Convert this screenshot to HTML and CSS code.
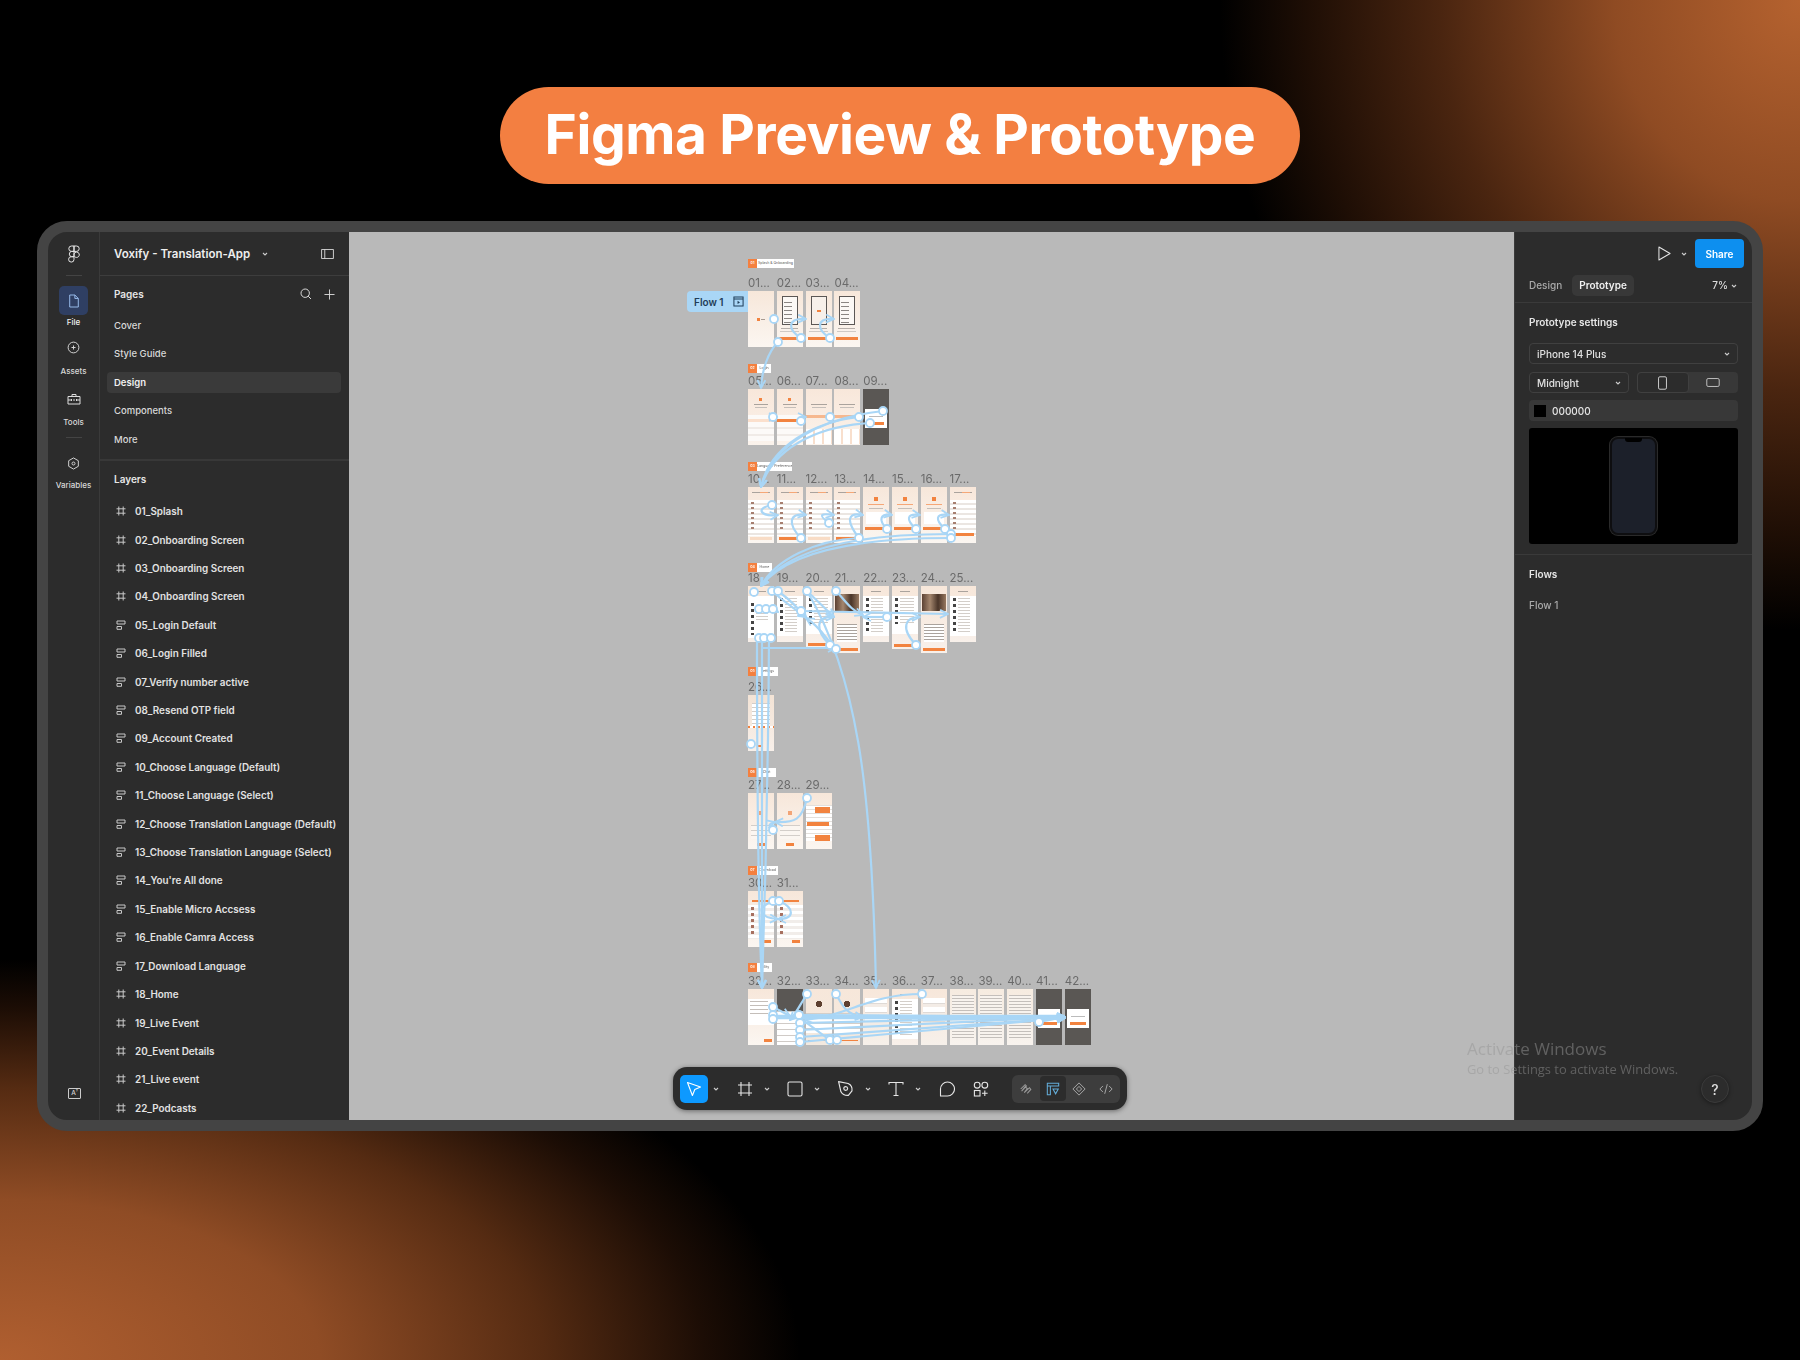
FILE: index.html
```html
<!DOCTYPE html>
<html lang="en">
<head>
    <meta charset="UTF-8">
    <title>Figma Preview &amp; Prototype</title>
    <link rel="stylesheet" href="styles.css">
</head>
<body>
    <svg class="sprites" width="0" height="0">
        <symbol id="i-frame" viewBox="0 0 10 10"><path d="M2.8.5v9M7.2.5v9M.5 2.8h9M.5 7.2h9" fill="none" stroke="currentColor" stroke-width="1"/></symbol>
        <symbol id="i-auto" viewBox="0 0 10 10"><path d="M1 1h8v3H1zM1 6.5h4.5v2.8H1z" fill="none" stroke="currentColor" stroke-width="1"/></symbol>
        <symbol id="i-chev" viewBox="0 0 8 8"><path d="M2 3l2 2 2-2" fill="none" stroke="currentColor" stroke-width="1.1"/></symbol>
    </svg>

    <h1 class="pill">Figma Preview &amp; Prototype</h1>

    <div class="frame">
        <nav class="rail">
            <svg class="rail-logo" viewBox="0 0 12 18" width="12" height="18"><path d="M6 1H3.5a2.7 2.7 0 0 0 0 5.4H6zM6 1h2.5a2.7 2.7 0 0 1 0 5.4H6zM6 6.4H3.5a2.7 2.7 0 0 0 0 5.3H6zM11.200 9a2.7 2.7 0 1 1-5.200 0 2.7 2.7 0 0 1 5.200 0zM6 11.700H3.500A2.700 2.700 0 1 0 6 14.400z" fill="none" stroke="#e6e6e6" stroke-width="1"/></svg>
            <div class="rail-rule first"></div>
            <div class="rail-item active">
                <span class="rail-btn"><svg viewBox="0 0 14 16" width="12" height="14"><path d="M2 1h6l4 4v10H2zM8 1v4h4" fill="none" stroke="#9cc0f0" stroke-width="1.1"/></svg></span>
                <span>File</span>
            </div>
            <div class="rail-item assets">
                <svg viewBox="0 0 14 14" width="13" height="13"><circle cx="7" cy="7" r="5.8" fill="none" stroke="#ddd" stroke-width="1"/><path d="M7 4.8v4.4M4.8 7h4.4" stroke="#ddd"/></svg>
                <span>Assets</span>
            </div>
            <div class="rail-item tools">
                <svg viewBox="0 0 14 14" width="14" height="14"><path d="M1 4.5h12V12H1zM5 4.5V2.5h4v2M1 8h3M6 8h2M10 8h3M4.5 7v2M9.5 7v2" fill="none" stroke="#ddd" stroke-width="1"/></svg>
                <span>Tools</span>
            </div>
            <div class="rail-rule"></div>
            <div class="rail-item vars">
                <svg viewBox="0 0 14 14" width="13" height="13"><path d="M7 1l5.2 3v6L7 13l-5.2-3V4z" fill="none" stroke="#ddd" stroke-width="1"/><circle cx="7" cy="7" r="1.6" fill="none" stroke="#ddd"/></svg>
                <span>Variables</span>
            </div>
            <div class="rail-bottom">A<sup>?</sup></div>
        </nav>

        <aside class="sidebar">
            <header class="side-head">
                <span class="file-name">Voxify - Translation-App</span>
                <svg class="chev" width="8" height="8"><use href="#i-chev"/></svg>
                <svg class="panel-toggle" viewBox="0 0 14 11" width="13" height="10"><path d="M.5.5h13v10H.5zM4 .5v10" fill="none" stroke="#ddd"/></svg>
            </header>
            <div class="pages">
                <div class="sec-title">
                    <span>Pages</span>
                    <svg viewBox="0 0 12 12" width="12" height="12"><circle cx="5.2" cy="5.2" r="4.2" fill="none" stroke="#ddd"/><path d="M8.2 8.2L11 11" stroke="#ddd"/></svg>
                    <svg viewBox="0 0 12 12" width="11" height="11"><path d="M6 .5v11M.5 6h11" stroke="#ddd"/></svg>
                </div>
                <ul class="page-list">
                    <li>Cover</li>
                    <li>Style Guide</li>
                    <li class="current">Design</li>
                    <li>Components</li>
                    <li>More</li>
                </ul>
            </div>
            <div class="layers">
                <div class="sec-title"><span>Layers</span></div>
                <ul class="layer-list">
                    <li><svg><use href="#i-frame"/></svg>01_Splash</li>
                    <li><svg><use href="#i-frame"/></svg>02_Onboarding Screen</li>
                    <li><svg><use href="#i-frame"/></svg>03_Onboarding Screen</li>
                    <li><svg><use href="#i-frame"/></svg>04_Onboarding Screen</li>
                    <li><svg><use href="#i-auto"/></svg>05_Login Default</li>
                    <li><svg><use href="#i-auto"/></svg>06_Login Filled</li>
                    <li><svg><use href="#i-auto"/></svg>07_Verify number active</li>
                    <li><svg><use href="#i-auto"/></svg>08_Resend OTP field</li>
                    <li><svg><use href="#i-auto"/></svg>09_Account Created</li>
                    <li><svg><use href="#i-auto"/></svg>10_Choose Language (Default)</li>
                    <li><svg><use href="#i-auto"/></svg>11_Choose Language (Select)</li>
                    <li><svg><use href="#i-auto"/></svg>12_Choose Translation Language (Default)</li>
                    <li><svg><use href="#i-auto"/></svg>13_Choose Translation Language (Select)</li>
                    <li><svg><use href="#i-auto"/></svg>14_You're All done</li>
                    <li><svg><use href="#i-auto"/></svg>15_Enable Micro Accsess</li>
                    <li><svg><use href="#i-auto"/></svg>16_Enable Camra Access</li>
                    <li><svg><use href="#i-auto"/></svg>17_Download Language</li>
                    <li><svg><use href="#i-frame"/></svg>18_Home</li>
                    <li><svg><use href="#i-frame"/></svg>19_Live Event</li>
                    <li><svg><use href="#i-frame"/></svg>20_Event Details</li>
                    <li><svg><use href="#i-frame"/></svg>21_Live event</li>
                    <li><svg><use href="#i-frame"/></svg>22_Podcasts</li>
                </ul>
            </div>
        </aside>

        <main class="canvas">
            <div class="board">
                <section class="group g1">
                    <div class="group-label"><b>01</b><span class="w46">Splash &amp; Onboarding</span></div>
                    <div class="row">
                        <div class="cell"><i>01...</i><div class="thumb splash"></div></div>
                        <div class="cell"><i>02...</i><div class="thumb onb"></div></div>
                        <div class="cell"><i>03...</i><div class="thumb onb plain"></div></div>
                        <div class="cell"><i>04...</i><div class="thumb onb"></div></div>
                    </div>
                </section>
                <section class="group g2">
                    <div class="group-label"><b>02</b><span class="w23">Login</span></div>
                    <div class="row">
                        <div class="cell"><i>05...</i><div class="thumb login"></div></div>
                        <div class="cell"><i>06...</i><div class="thumb login filled"></div></div>
                        <div class="cell"><i>07...</i><div class="thumb otp"></div></div>
                        <div class="cell"><i>08...</i><div class="thumb otp"></div></div>
                        <div class="cell"><i>09...</i><div class="thumb dark modal"></div></div>
                    </div>
                </section>
                <section class="group g3">
                    <div class="group-label"><b>03</b><span class="w35">Language Preference</span></div>
                    <div class="row">
                        <div class="cell"><i>10...</i><div class="thumb lang"></div></div>
                        <div class="cell"><i>11...</i><div class="thumb lang cta"></div></div>
                        <div class="cell"><i>12...</i><div class="thumb lang"></div></div>
                        <div class="cell"><i>13...</i><div class="thumb lang cta"></div></div>
                        <div class="cell"><i>14...</i><div class="thumb done"></div></div>
                        <div class="cell"><i>15...</i><div class="thumb done"></div></div>
                        <div class="cell"><i>16...</i><div class="thumb done"></div></div>
                        <div class="cell"><i>17...</i><div class="thumb lang cta dl"></div></div>
                    </div>
                </section>
                <section class="group g4">
                    <div class="group-label"><b>04</b><span class="w15">Home</span></div>
                    <div class="row">
                        <div class="cell"><i>18...</i><div class="thumb home"></div></div>
                        <div class="cell"><i>19...</i><div class="thumb list"></div></div>
                        <div class="cell"><i>20...</i><div class="thumb list cta h62"></div></div>
                        <div class="cell"><i>21...</i><div class="thumb photo h67"></div></div>
                        <div class="cell"><i>22...</i><div class="thumb list"></div></div>
                        <div class="cell"><i>23...</i><div class="thumb list cta h63"></div></div>
                        <div class="cell"><i>24...</i><div class="thumb photo h67"></div></div>
                        <div class="cell"><i>25...</i><div class="thumb list"></div></div>
                    </div>
                </section>
                <section class="group g5">
                    <div class="group-label"><b>05</b><span class="w21">Settings</span></div>
                    <div class="row">
                        <div class="cell"><i>26...</i><div class="thumb keys"></div></div>
                    </div>
                </section>
                <section class="group g6">
                    <div class="group-label"><b>06</b><span class="w19">Chat</span></div>
                    <div class="row">
                        <div class="cell"><i>27...</i><div class="thumb voice"></div></div>
                        <div class="cell"><i>28...</i><div class="thumb voice"></div></div>
                        <div class="cell"><i>29...</i><div class="thumb chat"></div></div>
                    </div>
                </section>
                <section class="group g7">
                    <div class="group-label"><b>07</b><span class="w21">Download</span></div>
                    <div class="row">
                        <div class="cell"><i>30...</i><div class="thumb saved"></div></div>
                        <div class="cell"><i>31...</i><div class="thumb saved"></div></div>
                    </div>
                </section>
                <section class="group g8">
                    <div class="group-label"><b>08</b><span class="w15">Utility</span></div>
                    <div class="row">
                        <div class="cell"><i>32...</i><div class="thumb form"></div></div>
                        <div class="cell"><i>32...</i><div class="thumb dark sheet"></div></div>
                        <div class="cell"><i>33...</i><div class="thumb profile"></div></div>
                        <div class="cell"><i>34...</i><div class="thumb profile"></div></div>
                        <div class="cell"><i>35...</i><div class="thumb rows"></div></div>
                        <div class="cell"><i>36...</i><div class="thumb list"></div></div>
                        <div class="cell"><i>37...</i><div class="thumb rows"></div></div>
                        <div class="cell"><i>38...</i><div class="thumb doc"></div></div>
                        <div class="cell"><i>39...</i><div class="thumb doc"></div></div>
                        <div class="cell"><i>40...</i><div class="thumb doc"></div></div>
                        <div class="cell"><i>41...</i><div class="thumb dark modal"></div></div>
                        <div class="cell"><i>42...</i><div class="thumb dark modal"></div></div>
                    </div>
                </section>
            </div>

            <!-- prototype wires, in page coordinates -->
            <svg class="wires" viewBox="349 232 1165 888">
                <defs>
                    <marker id="arrow" viewBox="0 0 10 10" refX="9" refY="5" markerWidth="10" markerHeight="10" markerUnits="userSpaceOnUse" orient="auto"><path d="M1 1l8 4-8 4" fill="none" stroke="#a9d6f6" stroke-width="1.8"/></marker>
                </defs>
                <g class="lines" marker-end="url(#arrow)">
                    <!-- 1 -->
                    <path d="M801 338C788 330 786 318 806 319"/>
                    <path d="M830 338C817 330 815 318 834 319"/>
                    <path d="M778 342C768 352 762 370 761 388"/>
                    <!-- 2 -->
                    <path d="M773 417L777 417"/>
                    <path d="M801 421C800 417 800 417 806 417"/>
                    <path d="M883 411C820 418 772 445 761 487"/>
                    <path d="M870 423C815 426 772 450 761 487"/>
                    <path d="M859 417C815 422 770 445 761 487"/>
                    <!-- 3 -->
                    <path d="M772 505C755 508 760 517 778 515"/>
                    <path d="M801 538C788 525 788 512 806 515"/>
                    <path d="M829 523C818 515 820 513 834 515"/>
                    <path d="M859 538C845 520 848 512 863 515"/>
                    <path d="M887 529C878 520 880 513 892 515"/>
                    <path d="M916 529C906 520 906 513 920 515"/>
                    <path d="M945 529C935 520 935 513 949 515"/>
                    <path d="M951 534C870 534 790 545 761 586"/>
                    <path d="M951 538C870 538 790 548 761 586"/>
                    <path d="M859 538C815 540 775 560 761 586"/>
                    <!-- 4 -->
                    <path d="M773 609L778 612"/>
                    <path d="M772 591C782 600 790 606 806 617"/>
                    <path d="M778 591C790 600 800 610 806 618"/>
                    <path d="M801 611L948 614"/>
                    <path d="M807 591L834 617"/>
                    <path d="M836 591C845 600 850 610 863 615"/>
                    <path d="M830 645C815 630 815 616 834 617"/>
                    <path d="M887 617L863 617"/>
                    <path d="M916 645C900 628 905 617 920 617"/>
                    <path d="M836 649C826 640 822 628 806 618"/>
                    <path d="M762 648L836 648"/>
                    <!-- 6 -->
                    <path d="M807 798C802 820 795 823 775 822"/>
                    <path d="M773 830C768 826 768 824 775 822"/>
                    <!-- 7 -->
                    <path d="M773 901C755 908 760 918 778 919"/>
                    <path d="M779 901C795 908 795 919 778 919"/>
                    <!-- vertical trunks -->
                    <path d="M757 638C757 800 758 900 762 988"/>
                    <path d="M762 638L762 988"/>
                    <path d="M769 638C768 800 765 900 762 988"/>
                    <path d="M807 591C860 680 872 800 876 988"/>
                    <!-- 8 -->
                    <path class="thick" d="M773 1017L1065 1017"/>
                    <path d="M799 1015L1065 1017"/>
                    <path d="M800 1023L1065 1017"/>
                    <path d="M800 1030L1065 1017"/>
                    <path d="M800 1037L1065 1018"/>
                    <path d="M800 1042L1065 1018"/>
                    <path d="M922 994C870 994 850 1015 805 1020"/>
                    <path d="M807 994C800 1005 795 1015 790 1020"/>
                    <path d="M836 994C842 1005 846 1015 863 1017"/>
                    <path d="M773 1007L790 1016"/>
                    <path d="M830 1040C815 1030 805 1020 795 1016"/>
                    <path d="M1039 1022L1065 1017"/>
                </g>
                <g class="nodes">
                    <circle cx="774" cy="319" r="4"/><circle cx="778" cy="342" r="4"/><circle cx="801" cy="338" r="4"/><circle cx="830" cy="338" r="4"/>
                    <circle cx="773" cy="417" r="4"/><circle cx="801" cy="421" r="4"/><circle cx="830" cy="417" r="4"/><circle cx="859" cy="417" r="4"/><circle cx="883" cy="411" r="4"/><circle cx="870" cy="423" r="4"/>
                    <circle cx="772" cy="505" r="4"/><circle cx="801" cy="538" r="4"/><circle cx="829" cy="523" r="4"/><circle cx="859" cy="538" r="4"/><circle cx="887" cy="529" r="4"/><circle cx="916" cy="529" r="4"/><circle cx="945" cy="529" r="4"/><circle cx="951" cy="534" r="4"/><circle cx="951" cy="538" r="4"/>
                    <circle cx="754" cy="592" r="4"/><circle cx="772" cy="591" r="4"/><circle cx="778" cy="591" r="4"/><circle cx="807" cy="591" r="4"/><circle cx="836" cy="591" r="4"/><circle cx="759" cy="609" r="4"/><circle cx="766" cy="609" r="4"/><circle cx="773" cy="609" r="4"/><circle cx="801" cy="611" r="4"/><circle cx="887" cy="617" r="4"/><circle cx="916" cy="645" r="4"/><circle cx="830" cy="645" r="4"/><circle cx="836" cy="649" r="4"/><circle cx="759" cy="638" r="4"/><circle cx="764" cy="638" r="4"/><circle cx="771" cy="638" r="4"/>
                    <circle cx="751" cy="744" r="4"/>
                    <circle cx="807" cy="798" r="4"/><circle cx="773" cy="830" r="4"/>
                    <circle cx="773" cy="901" r="4"/><circle cx="779" cy="901" r="4"/>
                    <circle cx="807" cy="994" r="4"/><circle cx="836" cy="994" r="4"/><circle cx="773" cy="1007" r="4"/><circle cx="773" cy="1015" r="4"/><circle cx="773" cy="1019" r="4"/><circle cx="799" cy="1015" r="4"/><circle cx="800" cy="1023" r="4"/><circle cx="800" cy="1030" r="4"/><circle cx="800" cy="1037" r="4"/><circle cx="800" cy="1042" r="4"/><circle cx="830" cy="1040" r="4"/><circle cx="837" cy="1040" r="4"/><circle cx="922" cy="994" r="4"/><circle cx="1039" cy="1022" r="4"/>
                </g>
            </svg>

            <div class="flow-tag">
                <span>Flow 1</span>
                <svg viewBox="0 0 12 12" width="11" height="11"><path d="M1 1h10v10H1zM1 3.2h10" fill="none" stroke="#1f3d58" stroke-width="1.1"/><path d="M5 5.2l2.6 1.8L5 8.8z" fill="#1f3d58"/></svg>
            </div>

            <div class="toolbar">
                <div class="tool-combo">
                    <span class="tool on"><svg viewBox="0 0 16 16" width="16" height="16"><path d="M1.5 1.5l13 4.6-5.7 2.400-2.400 6z" fill="none" stroke="#fff" stroke-width="1.1" stroke-linejoin="round"/></svg></span>
                    <svg class="chev" width="8" height="8"><use href="#i-chev"/></svg>
                </div>
                <div class="tool-combo">
                    <span class="tool"><svg viewBox="0 0 16 16" width="16" height="16"><path d="M4 1v14M12 1v14M1 4h14M1 12h14" fill="none" stroke="#e6e6e6" stroke-width="1.1"/></svg></span>
                    <svg class="chev" width="8" height="8"><use href="#i-chev"/></svg>
                </div>
                <div class="tool-combo">
                    <span class="tool"><svg viewBox="0 0 16 16" width="16" height="16"><rect x="1" y="1" width="14" height="14" rx="1.5" fill="none" stroke="#e6e6e6" stroke-width="1.1"/></svg></span>
                    <svg class="chev" width="8" height="8"><use href="#i-chev"/></svg>
                </div>
                <div class="tool-combo">
                    <span class="tool"><svg viewBox="0 0 16 16" width="17" height="17"><path d="M1.5 1.5l9 1.800c2.600 1.200 4 4.300 3.600 7l-3.400 4.200c-2.800.2-5.600-1-7-3.400z" fill="none" stroke="#e6e6e6" stroke-width="1.1" stroke-linejoin="round"/><circle cx="8.200" cy="8" r="1.800" fill="none" stroke="#e6e6e6" stroke-width="1.1"/></svg></span>
                    <svg class="chev" width="8" height="8"><use href="#i-chev"/></svg>
                </div>
                <div class="tool-combo">
                    <span class="tool"><svg viewBox="0 0 16 16" width="16" height="16"><path d="M1 3.500V1.500h14v2M8 1.500v13M5.500 14.500h5" fill="none" stroke="#e6e6e6" stroke-width="1.1"/></svg></span>
                    <svg class="chev" width="8" height="8"><use href="#i-chev"/></svg>
                </div>
                <span class="tool"><svg viewBox="0 0 16 16" width="16" height="16"><path d="M8.500 1a6.500 6.500 0 1 1 0 14H1.500V8A7 7 0 0 1 8.500 1z" fill="none" stroke="#e6e6e6" stroke-width="1.1" stroke-linejoin="round"/></svg></span>
                <span class="tool"><svg viewBox="0 0 16 16" width="16" height="16"><circle cx="4.200" cy="4.200" r="2.900" fill="none" stroke="#e6e6e6" stroke-width="1.1"/><circle cx="11.800" cy="4.200" r="2.900" fill="none" stroke="#e6e6e6" stroke-width="1.1"/><rect x="1.400" y="9.500" width="5.600" height="5.500" fill="none" stroke="#e6e6e6" stroke-width="1.100"/><path d="M11.800 9.500v5.500M9 12.200h5.600" stroke="#e6e6e6" stroke-width="1.1"/></svg></span>
                <div class="mode-group">
                    <span class="mode"><svg viewBox="0 0 16 16" width="14" height="14"><path d="M2 8l5-5 1.500 1.500-5.500 6L7 5.500l2.500 2L6 12l6-5.500 1.500 2L9.500 13" fill="none" stroke="#999" stroke-width="1.200"/></svg></span>
                    <span class="mode on"><svg viewBox="0 0 16 16" width="14" height="14"><path d="M1.500 1.500h13v3h-13zM1.500 4.500v10h3.500v-10M8 8h6l-3 5.500z" fill="none" stroke="#63acd8" stroke-width="1.200"/></svg></span>
                    <span class="mode"><svg viewBox="0 0 16 16" width="14" height="14"><path d="M8 1l7 7-7 7-7-7zM8 5l3 3-3 3-3-3z" fill="none" stroke="#aaa" stroke-width="1.100"/></svg></span>
                    <span class="mode"><svg viewBox="0 0 16 16" width="14" height="14"><path d="M4.500 4.500L1 8l3.500 3.500M11.500 4.500L15 8l-3.500 3.500M9.500 2.500l-3 11" fill="none" stroke="#aaa" stroke-width="1.100"/></svg></span>
                </div>
            </div>
        </main>

        <aside class="panel">
            <div class="panel-top">
                <svg viewBox="0 0 14 16" width="13" height="15"><path d="M1 1l12 7-12 7z" fill="none" stroke="#e6e6e6" stroke-width="1.100" stroke-linejoin="round"/></svg>
                <svg class="chev" width="8" height="8"><use href="#i-chev"/></svg>
                <button class="share">Share</button>
            </div>
            <div class="tabs">
                <span class="tab">Design</span>
                <span class="tab on">Prototype</span>
                <span class="zoom-val">7%<svg class="chev" width="8" height="8"><use href="#i-chev"/></svg></span>
            </div>
            <section class="proto">
                <h3>Prototype settings</h3>
                <div class="field">iPhone 14 Plus<svg class="chev" width="8" height="8"><use href="#i-chev"/></svg></div>
                <div class="field-row">
                    <div class="field small">Midnight<svg class="chev" width="8" height="8"><use href="#i-chev"/></svg></div>
                    <div class="orient">
                        <span class="on"><svg viewBox="0 0 10 15" width="9" height="14"><rect x=".6" y=".6" width="8.800" height="13.800" rx="1.500" fill="none" stroke="#ddd"/></svg></span>
                        <span><svg viewBox="0 0 15 10" width="14" height="9"><rect x=".6" y=".6" width="13.800" height="8.800" rx="1.500" fill="none" stroke="#ccc"/></svg></span>
                    </div>
                </div>
                <div class="swatch-row"><i></i>000000</div>
                <div class="preview">
                    <div class="phone"></div>
                </div>
            </section>
            <section class="flows">
                <h3>Flows</h3>
                <p>Flow 1</p>
            </section>
            <button class="help">?</button>
        </aside>

        <div class="watermark">
            <strong>Activate Windows</strong>
            <span>Go to Settings to activate Windows.</span>
        </div>
    </div>
</body>
</html>
```

FILE: styles.css
```css
* {
    box-sizing: border-box;
}

body {
    margin: 0;
    height: 1360px;
    overflow: hidden;
    font-family: Inter, "Liberation Sans", sans-serif;
    background:
        radial-gradient(ellipse 580px 630px at 100% 0%, #b5622f 0%, #8f4b23 32%, #4a2510 62%, #1e0e05 85%, rgba(0, 0, 0, 0) 100%),
        radial-gradient(ellipse 800px 400px at 0% 100%, #b05f30 0%, #8f4c25 40%, #552b12 68%, #1c0d05 88%, rgba(0, 0, 0, 0) 100%),
        #000;
}

.sprites {
    position: absolute;
}

.pill {
    width: 800px;
    height: 97px;
    margin: 87px auto 37px;
    border-radius: 49px;
    background: #f37f41;
    color: #fff;
    font-size: 55px;
    font-weight: 700;
    line-height: 95px;
    text-align: center;
    letter-spacing: -.4px;
}

.frame {
    position: relative;
    display: flex;
    width: 1726px;
    height: 910px;
    margin-left: 37px;
    border: 11px solid #444;
    border-radius: 30px;
    overflow: hidden;
    background: #2c2c2c;
    color: #e6e6e6;
    font-size: 10px;
}

.chev {
    color: #ccc;
    flex: none;
}

/* left icon rail */
.rail {
    position: relative;
    flex: none;
    width: 52px;
    border-right: 1px solid #3a3a3a;
    display: flex;
    flex-direction: column;
    align-items: center;
    font-size: 8px;
    font-weight: 500;
    color: #d8d8d8;
}

.rail-logo {
    margin-top: 13px;
}

.rail-rule {
    width: 16px;
    height: 1px;
    background: #444;
    margin-top: 10px;
}

.rail-rule.first {
    margin-top: 12px;
}

.rail-item {
    display: flex;
    flex-direction: column;
    align-items: center;
}

.rail-item.active {
    margin-top: 10px;
    gap: 2px;
    color: #f0f0f0;
}

.rail-btn {
    width: 29px;
    height: 29px;
    border-radius: 5px;
    background: #2f3f63;
    display: flex;
    align-items: center;
    justify-content: center;
}

.assets {
    margin-top: 14px;
    gap: 12px;
}

.tools {
    margin-top: 16px;
    gap: 11px;
}

.vars {
    margin-top: 19px;
    gap: 10px;
}

.rail-bottom {
    position: absolute;
    left: 20px;
    bottom: 21px;
    width: 13px;
    height: 11px;
    border: 1px solid #ccc;
    border-radius: 1px;
    font-size: 6.500px;
    line-height: 9px;
    text-align: center;
}

.rail-bottom sup {
    font-size: 4px;
    line-height: 0;
}

/* layers sidebar */
.sidebar {
    flex: none;
    width: 249px;
    display: flex;
    flex-direction: column;
    overflow: hidden;
}

.side-head {
    height: 44px;
    flex: none;
    display: flex;
    align-items: center;
    padding: 0 15px 0 14px;
    border-bottom: 1px solid #3d3d3d;
}

.file-name {
    font-size: 11.500px;
    font-weight: 600;
    color: #eee;
}

.side-head .chev {
    margin-left: 11px;
}

.panel-toggle {
    margin-left: auto;
}

.sec-title {
    display: flex;
    align-items: center;
    gap: 12px;
    height: 28px;
    padding: 0 14px 0 14px;
    font-weight: 600;
}

.sec-title span {
    margin-right: auto;
}

.pages {
    flex: none;
    height: 185px;
    padding-top: 4px;
    border-bottom: 2px solid #383838;
}

.page-list,
.layer-list {
    list-style: none;
    margin: 0;
    padding: 0;
}

.page-list {
    margin: 7px 8px 0 7px;
    display: flex;
    flex-direction: column;
    gap: 7.400px;
    font-size: 9.500px;
}

.page-list li {
    height: 21px;
    line-height: 21px;
    padding-left: 7px;
    border-radius: 4px;
    color: #d8d8d8;
    font-weight: 500;
}

.page-list li.current {
    background: #3a3a3a;
    color: #f0f0f0;
    font-weight: 600;
}

.layers {
    padding-top: 4px;
}

.layer-list {
    margin-top: 4px;
}

.layer-list li {
    display: flex;
    align-items: center;
    height: 28.420px;
    padding-left: 16px;
    font-size: 9.900px;
    font-weight: 600;
    color: #e2e2e2;
    white-space: nowrap;
}

.layer-list svg {
    flex: none;
    width: 10px;
    height: 10px;
    margin-right: 9px;
    color: #c8c8c8;
}

/* canvas */
.canvas {
    position: relative;
    flex: none;
    width: 1165px;
    background: #b9b9b9;
    overflow: hidden;
}

.board {
    padding: 27px 0 0 399px;
    filter: blur(.4px);
}

.group {
    display: flex;
    flex-direction: column;
}

.g1 { height: 105px; }
.g2 { height: 98px; }
.g3 { height: 101px; }
.g4 { height: 104px; }
.g5 { height: 101px; }
.g6 { height: 98px; }
.g7 { height: 97px; }

.group-label {
    display: flex;
    height: 9px;
    margin-bottom: 3px;
    font-size: 3.500px;
    line-height: 9px;
}

.g1 .group-label { margin-bottom: 10px; }
.g4 .group-label { margin-bottom: 1px; }
.g5 .group-label { margin-bottom: 6px; }
.g8 .group-label { margin-bottom: 4px; }

.group-label b {
    width: 9px;
    background: #f4803f;
    color: #fff;
    text-align: center;
    font-weight: 600;
}

.group-label span {
    background: #fff;
    color: #555;
    text-align: center;
    white-space: nowrap;
    overflow: hidden;
}

.w46 { width: 37px; }
.w35 { width: 35px; }
.w23 { width: 14px; }
.w21 { width: 21px; }
.w19 { width: 19px; }
.w15 { width: 15px; }

.row {
    display: flex;
    align-items: flex-start;
    gap: 2.800px;
}

.cell {
    width: 26px;
}

.cell i {
    display: block;
    height: 10px;
    margin-bottom: 3px;
    font-style: normal;
    font-size: 11.500px;
    line-height: 10px;
    color: #6a6a6a;
    white-space: nowrap;
}

/* thumbnails: stripes stand in for the tiny screens */
.thumb {
    width: 26px;
    height: 56px;
    background-repeat: no-repeat;
    background-color: #f8efe7;
}

.h62 { height: 62px; }
.h63 { height: 63px; }
.h67 { height: 67px; }

.splash {
    background-image:
        linear-gradient(#f2833f, #f2833f),
        linear-gradient(#a89a90, #a89a90),
        linear-gradient(#f7e7da, #fbf6f1);
    background-size: 3px 3px, 4px 1px, 100% 100%;
    background-position: 9px 27px, 13px 28px, 0 0;
}

.onb {
    background-image:
        linear-gradient(#f2833f, #f2833f),
        linear-gradient(#b6afaa, #b6afaa),
        linear-gradient(#cfc9c4, #cfc9c4),
        repeating-linear-gradient(#8a8582 0 1px, #fbf8f5 1px 4px),
        linear-gradient(#fbf8f5, #fbf8f5),
        linear-gradient(#5b5755, #5b5755),
        linear-gradient(#f7e7da, #fbf6f1);
    background-size: 22px 3px, 17px 1px, 19px 1px, 8px 21px, 14px 27px, 16px 29px, 100% 100%;
    background-position: 2px 46px, 4px 37px, 3px 40px, 7px 11px, 6px 6px, 5px 5px, 0 0;
}

.onb.plain {
    background-image:
        linear-gradient(#f2833f, #f2833f),
        linear-gradient(#b6afaa, #b6afaa),
        linear-gradient(#cfc9c4, #cfc9c4),
        linear-gradient(#f2833f, #f2833f),
        linear-gradient(#f7f0ea, #f7f0ea),
        linear-gradient(#5b5755, #5b5755),
        linear-gradient(#f7e7da, #fbf6f1);
    background-size: 22px 3px, 17px 1px, 19px 1px, 4px 2px, 14px 27px, 16px 29px, 100% 100%;
    background-position: 2px 46px, 4px 37px, 3px 40px, 11px 19px, 6px 6px, 5px 5px, 0 0;
}

.login,
.login.filled {
    background-size: 3px 3px, 14px 1px, 12px 1px, 100% 3px, 100% 26px, 100% 100%;
    background-position: 11px 9px, 6px 15px, 7px 18px, 0 30px, 0 26px, 0 0;
}

.login {
    background-image:
        linear-gradient(#f2833f, #f2833f),
        linear-gradient(#aaa39d, #aaa39d),
        linear-gradient(#c4beb9, #c4beb9),
        linear-gradient(#fbe0cd, #fbe0cd),
        repeating-linear-gradient(#fcfaf8 0 5px, #f0ebe7 5px 7px),
        linear-gradient(#f8e7da, #fbf3ec);
}

.login.filled {
    background-image:
        linear-gradient(#f2833f, #f2833f),
        linear-gradient(#aaa39d, #aaa39d),
        linear-gradient(#c4beb9, #c4beb9),
        linear-gradient(#f2833f, #f2833f),
        repeating-linear-gradient(#fcfaf8 0 5px, #f0ebe7 5px 7px),
        linear-gradient(#f8e7da, #fbf3ec);
}

.otp {
    background-image:
        linear-gradient(#aaa39d, #aaa39d),
        linear-gradient(#c4beb9, #c4beb9),
        linear-gradient(#f6b88f, #f6b88f),
        repeating-linear-gradient(90deg, #fff 0 7px, #f8dfcd 7px 9px),
        linear-gradient(#f8e7da, #fbf3ec);
    background-size: 16px 1px, 14px 1px, 100% 3px, 100% 15px, 100% 100%;
    background-position: 5px 15px, 6px 18px, 0 26px, 0 40px, 0 0;
}

.dark {
    background-image: linear-gradient(#5a5754, #5a5754);
}

.dark.modal {
    background-image:
        linear-gradient(#f2833f, #f2833f),
        linear-gradient(#bbb, #bbb),
        linear-gradient(#fff, #fff),
        linear-gradient(#5a5754, #5a5754);
    background-size: 16px 3px, 14px 1px, 22px 19px, 100% 100%;
    background-position: 5px 33px, 6px 27px, 2px 20px, 0 0;
}

.dark.sheet {
    background-image:
        repeating-linear-gradient(#d0cbc7 0 1px, #fff 1px 6px),
        linear-gradient(#5a5754, #5a5754);
    background-size: 100% 34px, 100% 100%;
    background-position: 0 22px, 0 0;
}

.lang,
.lang.cta {
    background-size: 3px 27px, 22px 3px, 8px 1px, 18px 1px, 100% 36px, 100% 100%;
    background-position: 3px 15px, 2px 50px, 12px 5px, 4px 5px, 0 13px, 0 0;
}

.lang {
    background-image:
        repeating-linear-gradient(#a77f70 0 2px, transparent 2px 5px),
        linear-gradient(#f8dcc6, #f8dcc6),
        linear-gradient(#f5a777, #f5a777),
        linear-gradient(#aaa39d, #aaa39d),
        repeating-linear-gradient(#fff 0 3px, #ebe6e2 3px 5px),
        linear-gradient(#f8e7da, #fbf6f1);
}

.lang.cta {
    background-image:
        repeating-linear-gradient(#a77f70 0 2px, transparent 2px 5px),
        linear-gradient(#f2833f, #f2833f),
        linear-gradient(#f5a777, #f5a777),
        linear-gradient(#aaa39d, #aaa39d),
        repeating-linear-gradient(#fff 0 3px, #ebe6e2 3px 5px),
        linear-gradient(#f8e7da, #fbf6f1);
}

.lang.dl {
    background-position: 3px 15px, 2px 46px, 12px 5px, 4px 5px, 0 13px, 0 0;
}

.done {
    background-image:
        linear-gradient(#f2833f, #f2833f),
        linear-gradient(#f2833f, #f2833f),
        linear-gradient(#f5a777, #f5a777),
        linear-gradient(#c4beb9, #c4beb9),
        linear-gradient(#fff, #fff),
        linear-gradient(#f7e7da, #fbf6f1);
    background-size: 4px 4px, 22px 3px, 16px 1px, 14px 1px, 20px 12px, 100% 100%;
    background-position: 11px 10px, 2px 40px, 5px 17px, 6px 21px, 3px 25px, 0 0;
}

.home,
.list {
    background-image:
        linear-gradient(#aaa39d, #aaa39d),
        repeating-linear-gradient(#444 0 3px, transparent 3px 6px),
        repeating-linear-gradient(#d3cec9 0 1px, #fff 1px 3px),
        linear-gradient(#fff, #fff),
        linear-gradient(#f7e7da, #f8f0ea);
    background-size: 10px 1px, 3px 34px, 12px 34px, 100% 40px, 100% 100%;
    background-position: 8px 5px, 3px 12px, 8px 12px, 0 10px, 0 0;
}

.home {
    background-size: 10px 1px, 3px 32px, 12px 12px, 100% 42px, 100% 100%;
    background-position: 8px 5px, 3px 17px, 8px 24px, 0 10px, 0 0;
}

.list.cta {
    background-image:
        linear-gradient(#f2833f, #f2833f),
        linear-gradient(#aaa39d, #aaa39d),
        repeating-linear-gradient(#444 0 3px, transparent 3px 6px),
        repeating-linear-gradient(#d3cec9 0 1px, #fff 1px 3px),
        linear-gradient(#fff, #fff),
        linear-gradient(#f7e7da, #f8f0ea);
    background-size: 22px 3px, 10px 1px, 3px 26px, 14px 26px, 100% 38px, 100% 100%;
    background-position: 2px calc(100% - 2px), 8px 5px, 3px 12px, 8px 12px, 0 10px, 0 0;
}

.photo {
    background-image:
        linear-gradient(#f2833f, #f2833f),
        repeating-linear-gradient(#aaa39d 0 1px, #fff 1px 3px),
        linear-gradient(90deg, #5c4234, #a4866e, #4a3529, #977860),
        linear-gradient(#f7e7da, #f8f0ea);
    background-size: 22px 3px, 20px 18px, 24px 17px, 100% 100%;
    background-position: 2px 62px, 3px 38px, 1px 8px, 0 0;
}

.keys {
    background-image:
        linear-gradient(#f2833f, #f2833f),
        repeating-linear-gradient(90deg, #f2833f 0 2px, #fff 2px 5px),
        repeating-linear-gradient(#d3cec9 0 1px, #fff 1px 4px),
        linear-gradient(#f3e3d5, #f8f0ea);
    background-size: 4px 2px, 100% 2px, 18px 24px, 100% 100%;
    background-position: 9px 50px, 0 31px, 4px 8px, 0 0;
}

.voice {
    background-image:
        linear-gradient(#f2833f, #f2833f),
        linear-gradient(#f2a476, #f2a476),
        repeating-linear-gradient(#d3cec9 0 1px, #fbf6f1 1px 5px),
        linear-gradient(#f7e7da, #fbf6f1);
    background-size: 8px 3px, 4px 4px, 20px 14px, 100% 100%;
    background-position: 9px 50px, 11px 18px, 3px 32px, 0 0;
}

.chat {
    background-image:
        linear-gradient(#f2833f, #f2833f),
        linear-gradient(#f2833f, #f2833f),
        linear-gradient(#f2833f, #f2833f),
        repeating-linear-gradient(#e3dfdb 0 1px, #fff 1px 4px),
        linear-gradient(#f7e7da, #fbf6f1);
    background-size: 15px 6px, 22px 4px, 15px 6px, 100% 36px, 100% 100%;
    background-position: 9px 14px, 1px 29px, 9px 42px, 0 12px, 0 0;
}

.saved {
    background-image:
        linear-gradient(#f2833f, #f2833f),
        linear-gradient(#f2833f, #f2833f),
        repeating-linear-gradient(#a77060 0 3px, transparent 3px 6px),
        repeating-linear-gradient(#fff 0 3px, #f1edea 3px 6px),
        linear-gradient(#f7e7da, #fbf6f1);
    background-size: 18px 2px, 8px 3px, 3px 30px, 100% 34px, 100% 100%;
    background-position: 4px 9px, 15px 49px, 3px 16px, 0 14px, 0 0;
}

.form {
    background-image:
        linear-gradient(#f2833f, #f2833f),
        repeating-linear-gradient(#c4beb9 0 1px, #fff 1px 4px),
        linear-gradient(#fff, #fff),
        linear-gradient(#f7e7da, #fbf6f1);
    background-size: 8px 3px, 18px 16px, 100% 26px, 100% 100%;
    background-position: 16px 50px, 2px 12px, 0 10px, 0 0;
}

.profile {
    background-image:
        radial-gradient(circle, #5e4030 0 3px, transparent 3.500px),
        linear-gradient(#f2833f, #f2833f),
        repeating-linear-gradient(#d3cec9 0 1px, #fff 1px 5px),
        linear-gradient(#f7e7da, #f3e9df);
    background-size: 8px 8px, 22px 1px, 100% 20px, 100% 100%;
    background-position: 9px 11px, 2px 51px, 0 24px, 0 0;
}

.rows {
    background-image:
        repeating-linear-gradient(#fff 0 5px, #dfdad6 5px 6px, #f3ece6 6px 9px),
        linear-gradient(#f7e7da, #f6f0ea);
    background-size: 22px 27px, 100% 100%;
    background-position: 2px 9px, 0 0;
}

.doc {
    background-image:
        repeating-linear-gradient(#c4bfbb 0 1px, #f8f3ee 1px 3px),
        linear-gradient(#f6ebe0, #f8f3ee);
    background-size: 22px 44px, 100% 100%;
    background-position: 2px 6px, 0 0;
}

.wires {
    position: absolute;
    inset: 0;
    width: 100%;
    height: 100%;
    filter: blur(.3px);
}

.lines path {
    fill: none;
    stroke: #a9d6f6;
    stroke-width: 2.200;
}

.lines .thick {
    stroke-width: 4.500;
}

.nodes circle {
    fill: #fff;
    stroke: #a9d6f6;
    stroke-width: 1.800;
}

.flow-tag {
    position: absolute;
    left: 338px;
    top: 59px;
    width: 61px;
    height: 21px;
    display: flex;
    align-items: center;
    gap: 9px;
    padding-left: 7px;
    border-radius: 4px 0 0 4px;
    background: #a9d6f6;
    color: #1f3d58;
    font-size: 10px;
    font-weight: 600;
}

.toolbar {
    position: absolute;
    left: 324px;
    bottom: 10px;
    width: 454px;
    height: 43px;
    display: flex;
    align-items: center;
    gap: 6.500px;
    padding: 0 7px;
    border-radius: 14px;
    background: #2c2c2c;
    box-shadow: 0 1px 5px rgba(0, 0, 0, .45);
}

.tool-combo {
    display: flex;
    align-items: center;
    gap: 4px;
}

.tool-combo .chev {
    margin-right: 4px;
}

.tool {
    width: 28px;
    height: 28px;
    display: flex;
    align-items: center;
    justify-content: center;
    border-radius: 5px;
}

.tool.on {
    background: #0d99ff;
}

.mode-group {
    margin-left: auto;
    width: 108px;
    height: 28px;
    display: flex;
    align-items: center;
    padding: 0 1px;
    border-radius: 6px;
    background: #3d3d3d;
}

.mode {
    width: 26.500px;
    height: 25px;
    display: flex;
    align-items: center;
    justify-content: center;
    border-radius: 4px;
}

.mode.on {
    background: #2c2c2c;
}

/* right panel */
.panel {
    position: relative;
    flex: 1;
    border-left: 1px solid #3a3a3a;
}

.panel-top {
    height: 43px;
    display: flex;
    align-items: center;
    justify-content: flex-end;
    padding-right: 8px;
}

.panel-top .chev {
    margin: 0 7px 0 9px;
}

.share {
    width: 49px;
    height: 29px;
    border: 0;
    border-radius: 4px;
    background: #0d8fef;
    color: #fff;
    font: 600 10px Inter, sans-serif;
}

.tabs {
    height: 28px;
    display: flex;
    align-items: flex-start;
    padding-left: 7px;
    border-bottom: 1px solid #3a3a3a;
    color: #aaa;
    font-weight: 500;
}

.tab {
    height: 21px;
    line-height: 21px;
    padding: 0 7px;
    border-radius: 5px;
}

.tab.on {
    margin-left: 3px;
    background: #383838;
    color: #f0f0f0;
    font-weight: 600;
}

.zoom-val {
    margin-left: auto;
    margin-right: 14px;
    line-height: 21px;
    color: #ddd;
    display: flex;
    align-items: center;
    gap: 2px;
}

.proto {
    height: 252px;
    padding: 0 14px;
    border-bottom: 1px solid #3a3a3a;
}

.panel h3 {
    margin: 0;
    height: 37px;
    line-height: 39px;
    font-size: 10px;
    font-weight: 600;
    color: #e6e6e6;
}

.field {
    height: 21px;
    display: flex;
    align-items: center;
    justify-content: space-between;
    margin-top: 3px;
    padding: 0 6px 0 7px;
    border: 1px solid #404040;
    border-radius: 4px;
    color: #e2e2e2;
    font-weight: 500;
}

.field-row {
    display: flex;
    gap: 8px;
    margin-top: 8px;
}

.field.small {
    width: 100px;
    margin-top: 0;
}

.orient {
    flex: 1;
    height: 21px;
    display: flex;
    border-radius: 4px;
    background: #383838;
}

.orient span {
    flex: 1;
    display: flex;
    align-items: center;
    justify-content: center;
}

.orient .on {
    background: #2c2c2c;
    border: 1px solid #404040;
    border-radius: 4px;
}

.swatch-row {
    height: 21px;
    display: flex;
    align-items: center;
    gap: 6px;
    margin-top: 7px;
    padding-left: 5px;
    border-radius: 4px;
    background: #383838;
    font-weight: 500;
}

.swatch-row i {
    width: 12px;
    height: 12px;
    background: #000;
}

.preview {
    height: 116px;
    margin-top: 7px;
    padding-top: 9px;
    border-radius: 3px;
    background: #000;
}

.phone {
    position: relative;
    width: 47px;
    height: 98px;
    margin: 0 auto;
    border: 2px solid #0e0e10;
    border-radius: 8px;
    background: #1c202a;
    box-shadow: 0 0 0 1px #2a2a2a;
}

.phone::before {
    content: "";
    position: absolute;
    left: 13px;
    top: -1px;
    width: 17px;
    height: 4px;
    border-radius: 0 0 3px 3px;
    background: #000;
}

.flows {
    padding: 0 14px;
}

.flows h3 {
    margin-top: 0;
}

.flows p {
    margin: 7px 0 0;
    color: #aaa;
    font-weight: 500;
}

.help {
    position: absolute;
    right: 23px;
    bottom: 17px;
    width: 28px;
    height: 28px;
    border: 1px solid #3b3b3b;
    border-radius: 50%;
    background: #2c2c2c;
    color: #ddd;
    font: 500 14px Inter, sans-serif;
    box-shadow: 0 1px 4px rgba(0, 0, 0, .4);
}

/* windows watermark */
.watermark {
    position: absolute;
    left: 1419px;
    top: 805px;
    display: flex;
    flex-direction: column;
    color: rgba(150, 150, 150, .5);
    font-family: "Open Sans", sans-serif;
    pointer-events: none;
}

.watermark strong {
    font-size: 17px;
    font-weight: 400;
    line-height: 23px;
}

.watermark span {
    font-size: 12.900px;
    line-height: 18px;
}
```
